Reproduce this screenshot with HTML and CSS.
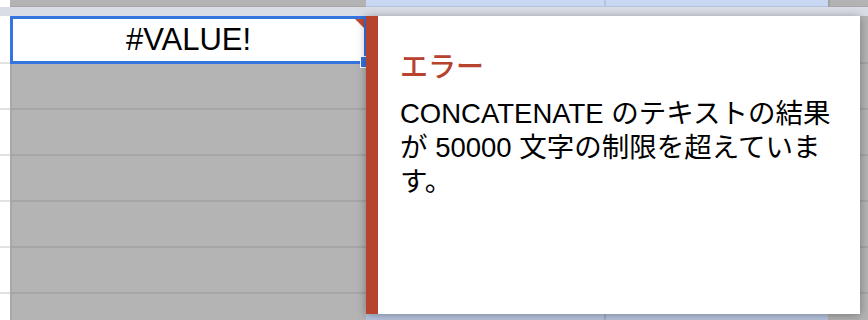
FILE: index.html
```html
<!DOCTYPE html>
<html lang="ja">
<head>
<meta charset="utf-8">
<link rel="stylesheet" href="styles.css">
</head>
<body>
<div class="sheet">
  <div class="colheads">
    <div class="corner"></div>
    <div class="ch cha"></div>
    <div class="ch chb"></div>
    <div class="ch chc"></div>
    <div class="ch chd"></div>
  </div>
  <div class="band"></div>
  <div class="row first">
    <div class="rh"></div>
    <div class="active">#VALUE!<span class="note"></span><span class="handle"></span></div>
    <div class="c cb"></div>
    <div class="c cc"></div>
    <div class="c cd"></div>
  </div>
  <div class="row"><div class="rh"></div><div class="c ca"></div><div class="c cb"></div><div class="c cc"></div><div class="c cd"></div></div>
  <div class="row"><div class="rh"></div><div class="c ca"></div><div class="c cb"></div><div class="c cc"></div><div class="c cd"></div></div>
  <div class="row"><div class="rh"></div><div class="c ca"></div><div class="c cb"></div><div class="c cc"></div><div class="c cd"></div></div>
  <div class="row"><div class="rh"></div><div class="c ca"></div><div class="c cb"></div><div class="c cc"></div><div class="c cd"></div></div>
  <div class="row"><div class="rh"></div><div class="c ca"></div><div class="c cb"></div><div class="c cc"></div><div class="c cd"></div></div>
  <div class="row"><div class="rh"></div><div class="c ca"></div><div class="c cb"></div><div class="c cc"></div><div class="c cd"></div></div>

  <div class="tooltip">
    <div class="tip-title">エラー</div>
    <div class="tip-body">CONCATENATE のテキストの結果が 50000 文字の制限を超えています。</div>
  </div>
</div>
</body>
</html>
```
FILE: styles.css
```css
html, body {
  margin: 0;
  padding: 0;
  background: #b4b4b4;
}
body {
  font-family: "Liberation Sans", "Noto Sans CJK JP", sans-serif;
}
.sheet {
  position: relative;
  width: 868px;
  height: 320px;
  overflow: hidden;
  background: #b4b4b4;
}
.colheads {
  display: flex;
  height: 7px;
}
.colheads > div {
  box-sizing: border-box;
  height: 7px;
  border-bottom: 1px solid #a6a6a6;
}
.corner {
  width: 10px;
  background: #ffffff;
  border-bottom-color: #ffffff !important;
}
.cha {
  width: 356px;
  background: #b3b3b3;
}
.chb {
  width: 240px;
  background: #c9d8f2;
  border-right: 2px solid #b7c4dc;
  border-bottom-color: #b7c4dc !important;
}
.chc {
  width: 222px;
  background: #c9d8f2;
  border-bottom-color: #b7c4dc !important;
}
.chd {
  width: 40px;
  background: #b3b3b3;
  border-left: 2px solid #a3a3a3;
}
.band {
  height: 9px;
  background: #d9dde6;
}
.row {
  display: flex;
  height: 46px;
}
.row.first {
  height: 48px;
}
.rh {
  box-sizing: border-box;
  width: 10px;
  background: #ffffff;
  border-bottom: 2px solid #e2e2e2;
}
.c {
  box-sizing: border-box;
  border-bottom: 2px solid #a6a6a6;
}
.ca {
  width: 356px;
  border-left: 2px solid #a8a8a8;
}
.cb {
  width: 240px;
  background: #b9c6e1;
  border-right: 2px solid #a3b0ca;
}
.cc {
  width: 222px;
  background: #b9c6e1;
}
.cd {
  width: 40px;
}
.active {
  position: relative;
  box-sizing: border-box;
  width: 356px;
  height: 48px;
  background: #ffffff;
  border-style: solid;
  border-color: #3575e0;
  border-width: 3px 2px 3px 3px;
  font-size: 31px;
  line-height: 42px;
  text-align: center;
  color: #000000;
}
.note {
  position: absolute;
  top: 0;
  right: 0;
  width: 0;
  height: 0;
  border-top: 9px solid #c04a35;
  border-left: 9px solid transparent;
}
.handle {
  position: absolute;
  right: -6px;
  bottom: -7px;
  width: 8px;
  height: 10px;
  background: #3575e0;
  border: 1px solid #ffffff;
}
.tooltip {
  position: absolute;
  left: 366px;
  top: 16px;
  width: 494px;
  height: 298px;
  box-sizing: border-box;
  background: #ffffff;
  border-left: 12px solid #b7432f;
  padding: 31px 20px 0 22px;
  box-shadow: 0 1px 9px rgba(0, 0, 0, 0.35);
}
.tip-title {
  font-family: "Noto Sans CJK JP", sans-serif;
  font-size: 28px;
  font-weight: 500;
  line-height: 36px;
  color: #b7432f;
  margin-bottom: 14px;
}
.tip-body {
  font-size: 27.5px;
  line-height: 34px;
  color: #000000;
}
```
